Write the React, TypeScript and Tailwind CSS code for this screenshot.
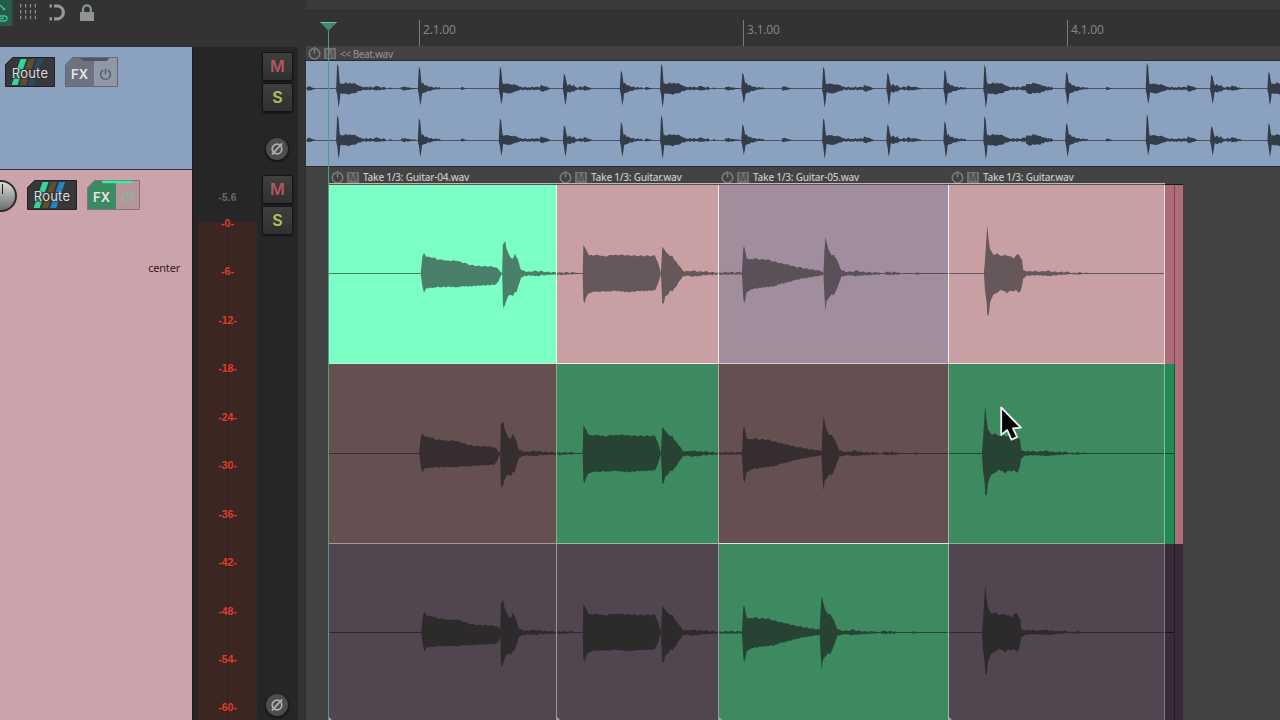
import clsx from "clsx";
import type { ReactNode } from "react";

type Point = [x: number, up: number, down: number];

type Burst = { at: number; points: Point[] };

// Points are in thirds of a pixel, relative to the start of the burst.
const BURSTS: Burst[] = [
  {
    at: 91.7,
    points: [
      [0, 0, 0], [5, 50, 38], [10, 62, 58], [16, 50, 45], [28, 49, 43], [42, 48, 42], [48, 42, 41], [62, 42, 41], [80, 39, 40],
      [108, 38, 41], [122, 34, 39], [138, 30, 38], [150, 25, 38], [180, 22, 36], [205, 21, 35], [225, 19, 33], [234, 12, 22], [243, 2, 2],
    ],
  },
  {
    at: 173.2,
    points: [
      [0, 5, 5], [2, 86, 90], [4, 90, 104], [9, 97, 92], [13, 75, 80], [19, 60, 66], [25, 48, 64], [32, 44, 68], [38, 60, 55],
      [42, 50, 58], [47, 42, 42], [53, 20, 24], [57, 10, 12], [70, 6, 7], [82, 5, 5], [98, 9, 8], [106, 6, 8], [116, 8, 5],
      [130, 4, 5], [150, 4, 3], [175, 3, 4], [198, 3, 3], [222, 3, 2], [224, 0, 0],
    ],
  },
  {
    at: 253.7,
    points: [
      [0, 5, 5], [2, 87, 80], [5, 80, 90], [12, 68, 68], [20, 54, 58], [36, 55, 55], [50, 54, 55], [64, 52, 53], [76, 53, 54],
      [82, 56, 53], [100, 56, 52], [138, 55, 56], [160, 53, 53], [217, 53, 51], [225, 35, 32], [234, 4, 4],
    ],
  },
  {
    at: 332,
    points: [
      [0, 5, 5], [4, 80, 90], [8, 74, 90], [13, 68, 68], [22, 58, 62], [28, 52, 50], [34, 54, 54], [40, 40, 44], [48, 32, 36],
      [56, 22, 22], [62, 14, 14], [65, 8, 8], [80, 7, 7], [98, 9, 9], [114, 6, 7], [132, 6, 5], [150, 4, 4], [176, 3, 3],
      [195, 4, 3], [236, 3, 3], [242, 4, 4],
    ],
  },
  {
    at: 413,
    points: [
      [0, 5, 5], [4, 78, 76], [7, 80, 90], [14, 46, 55], [24, 42, 50], [36, 45, 46], [56, 42, 43], [76, 42, 40], [96, 36, 38],
      [116, 31, 31], [136, 27, 27], [160, 20, 20], [180, 17, 15], [204, 12, 12], [224, 10, 8], [240, 6, 6], [244, 3, 3],
    ],
  },
  {
    at: 494.5,
    points: [
      [0, 5, 5], [3, 70, 70], [6, 110, 112], [9, 96, 84], [15, 72, 74], [24, 55, 62], [31, 56, 66], [38, 44, 50], [46, 28, 30],
      [53, 10, 10], [64, 6, 6], [84, 5, 5], [98, 10, 8], [114, 5, 5], [134, 4, 5], [150, 3, 3], [168, 3, 4], [172, 1, 1],
      [182, 1, 1], [186, 4, 4], [226, 4, 3], [230, 0, 0], [276, 0, 0], [279, 3, 3], [286, 3, 3], [288, 0, 0],
    ],
  },
  {
    at: 655,
    points: [
      [0, 5, 5], [3, 40, 50], [8, 120, 90], [10, 142, 124], [14, 100, 127], [18, 72, 88], [28, 57, 64], [38, 60, 58], [48, 54, 50],
      [60, 55, 52], [68, 54, 60], [78, 52, 52], [88, 45, 54], [95, 54, 48], [105, 57, 58], [110, 46, 52], [114, 42, 36],
      [118, 10, 14], [128, 6, 7], [150, 7, 5], [166, 5, 6], [194, 9, 7], [208, 5, 6], [230, 5, 4], [256, 4, 3], [262, 1, 1],
      [272, 3, 3], [292, 3, 3], [297, 0, 0], [308, 3, 3], [312, 0, 0],
    ],
  },
];

// Adds small, repeatable irregularities between the given points.
function roughen(points: Point[], step: number, amount: number): Point[] {
  const result: Point[] = [];
  for (let i = 0; i < points.length - 1; i++) {
    const [x0, u0, d0] = points[i];
    const [x1, u1, d1] = points[i + 1];
    result.push(points[i]);
    for (let x = x0 + step; x < x1 - step / 2; x += step) {
      const t = (x - x0) / (x1 - x0);
      const up = u0 + (u1 - u0) * t;
      const down = d0 + (d1 - d0) * t;
      result.push([
        x,
        Math.max(0, up + Math.sin(x * 12.9) * Math.min(amount, up * 0.5)),
        Math.max(0, down + Math.sin(x * 7.3 + 2) * Math.min(amount, down * 0.5)),
      ]);
    }
  }
  result.push(points[points.length - 1]);
  return result;
}

function outline(points: Point[], scale: number, at: number, base: number): string {
  const top = points.map(([x, up]) => `${(at + x * scale).toFixed(1)},${(base - up * scale).toFixed(1)}`);
  const bottom = [...points].reverse().map(([x, , down]) => `${(at + x * scale).toFixed(1)},${(base + down * scale).toFixed(1)}`);
  return `M${top.join("L")}L${bottom.join("L")}Z`;
}

const COLUMNS = [
  { start: 0, width: 228, title: "Take 1/3: Guitar-04.wav" },
  { start: 228, width: 162, title: "Take 1/3: Guitar.wav" },
  { start: 390, width: 230, title: "Take 1/3: Guitar-05.wav" },
  { start: 620, width: 216, title: "Take 1/3: Guitar.wav" },
];

type Lane = {
  base: number;
  shifts: number[];
  height: string;
  cells: { bg: string; wave: string; border: string }[];
  tails: [string, string];
};

const LANES: Lane[] = [
  {
    base: 88.5,
    shifts: [0, 0, 0, 0, 0, 0, 0],
    height: "h-[179px]",
    cells: [
      { bg: "bg-[#7bffc5]", wave: "text-[#4a8069]", border: "border-r-[#e8fff4] border-b-[#b8f5d8]" },
      { bg: "bg-[#c89fa3]", wave: "text-[#66575a]", border: "border-[#f8ecee]" },
      { bg: "bg-[#a08e9e]", wave: "text-[#5a5057]", border: "border-r-[#f4eef3] border-b-[#d8cdd6]" },
      { bg: "bg-[#c89fa3]", wave: "text-[#66575a]", border: "border-[#f0dfe1]" },
    ],
    tails: ["bg-[#ae6b78]", "bg-[#ae6b78]"],
  },
  {
    base: 89.5,
    shifts: [-1.6, -2, 0, 0, 0, -2, -2],
    height: "h-[180px]",
    cells: [
      { bg: "bg-[#654f51]", wave: "text-[#352d2f]", border: "border-r-[#7fae94] border-b-[#a8979a]" },
      { bg: "bg-[#3d8a60]", wave: "text-[#264334]", border: "border-[#a5b3a9]" },
      { bg: "bg-[#654f51]", wave: "text-[#352d2f]", border: "border-r-[#a5b3a9] border-b-[#d5ebe0]" },
      { bg: "bg-[#3d8a60]", wave: "text-[#264334]", border: "border-[#8fb39f]" },
    ],
    tails: ["bg-[#1f8a52]", "bg-[#ae6b78]"],
  },
  {
    base: 88.5,
    shifts: [0.5, -2, 0, 0, 0, -3.8, -2],
    height: "h-[177px]",
    cells: [
      { bg: "bg-[#51464f]", wave: "text-[#2c2a2b]", border: "border-[#9c939b]" },
      { bg: "bg-[#51464f]", wave: "text-[#2c2a2b]", border: "border-[#9c939b]" },
      { bg: "bg-[#3d8a60]", wave: "text-[#264334]", border: "border-[#a5b3a9]" },
      { bg: "bg-[#51464f]", wave: "text-[#2c2a2b]", border: "border-[#83757f]" },
    ],
    tails: ["bg-[#382a38]", "bg-[#382a38]"],
  },
];

type Hit = { at: number; up: number; down: number; decay: "long" | "medium" | "short" | "burst" };

const DECAYS: Record<Hit["decay"], Point[]> = {
  long: [
    [2, 5, 5], [5, 4.5, 5], [8, 6.5, 5.5], [10, 5, 6], [12, 6, 5.5], [14, 5, 5], [17, 5, 4.5], [19, 3.4, 3.5], [22, 2.4, 2.5], [24, 1.5, 1.5],
    [36, 1.3, 1.3], [39, 2.6, 2.2], [41, 1.4, 1.4], [47, 1.2, 1.3], [48, 0, 0], [51, 0, 0], [52, 1.2, 1], [54, 0, 0],
  ],
  medium: [
    [2, 4, 4], [5, 5, 4], [8, 5, 5.5], [11, 4, 4], [14, 4, 3.4], [17, 2.4, 2], [19, 1.4, 1.4], [28, 1.3, 1.3], [36, 1.4, 1.3], [39, 0.8, 1.4],
    [40, 3.2, 2.6], [43, 2.6, 2.8], [46, 2.2, 2], [48, 1, 1], [50, 0, 0],
  ],
  short: [[1.5, 4, 6], [3, 6, 4.5], [5, 3, 4], [7, 3.6, 3.2], [9, 2, 2.6], [12, 2, 1.6], [14, 0.8, 1.4], [16, 1.5, 1], [18, 0.5, 0.5], [20, 1.2, 1], [21, 0, 0]],
  burst: [[1.5, 6, 6], [3, 2.6, 3], [5, 4.5, 4], [7, 2.4, 3], [9, 4, 3.4], [11, 1.6, 1.4], [13, 1, 1], [16, 1.8, 1.8], [18, 0.7, 0.7], [20, 2.8, 2.4], [23, 1.4, 1.4], [26, 1, 1], [27, 0, 0]],
};

// Positions are measured from the left edge of the arrange view.
const HITS: Hit[] = [
  { at: 32, up: 25, down: 19, decay: "long" },
  { at: 113.7, up: 22, down: 17, decay: "short" },
  { at: 194.7, up: 22, down: 16, decay: "medium" },
  { at: 258.7, up: 15, down: 17, decay: "burst" },
  { at: 315.7, up: 18, down: 17, decay: "short" },
  { at: 355.9, up: 25, down: 19, decay: "long" },
  { at: 437.2, up: 16, down: 15, decay: "short" },
  { at: 518, up: 22, down: 19, decay: "medium" },
  { at: 582.2, up: 16, down: 17, decay: "burst" },
  { at: 639.3, up: 19, down: 18, decay: "short" },
  { at: 679.2, up: 24, down: 19.5, decay: "long" },
  { at: 761, up: 17, down: 17, decay: "short" },
  { at: 841.6, up: 26, down: 15.5, decay: "medium" },
  { at: 906, up: 14, down: 15.5, decay: "burst" },
  { at: 963.3, up: 17, down: 17, decay: "long" },
];

const BLOBS: [start: number, end: number, amp: number][] = [
  [1, 9, 2.2], [95, 110, 1.8], [155, 160, 1.5], [339, 346, 1.5], [419, 434, 1.8], [476, 485, 2.2], [606, 615, 2], [720, 747, 5.6], [800, 806, 1.6], [925, 936, 2],
];

function blobPath([start, end, amp]: [number, number, number], base: number): string {
  const len = end - start;
  const points: Point[] = [
    [0, amp * 0.8, amp * 0.7], [len * 0.15, amp * 0.8, amp], [len * 0.3, amp, amp * 0.8], [len * 0.5, amp * 0.7, amp * 0.8],
    [len * 0.7, amp * 0.35, amp * 0.4], [len, amp * 0.2, amp * 0.2],
  ];
  return outline(roughen(points, 1.2, 0.7), 1, start, base);
}

function BeatWave() {
  return (
    <svg viewBox="0 0 974 105" className="block h-[105px] w-[974px] text-[#333c49]" fill="currentColor" aria-hidden="true">
      {[27.5, 79].map((base) => (
        <g key={base}>
          <rect x="0" y={Math.floor(base)} width="974" height="1" opacity="0.75" />
          {HITS.map((hit) => (
            <g key={hit.at}>
              <path d={outline([[-1.8, 2, 2], [-0.8, hit.up, 6], [0.5, hit.up * 0.85, hit.down], [1.6, 7, hit.down * 0.7], [2.6, 2, 3]], 1, hit.at, base)} />
              <path d={outline(roughen(DECAYS[hit.decay], 1.1, 0.6), 1, hit.at, base)} />
            </g>
          ))}
          {BLOBS.map((blob) => (
            <path key={blob[0]} d={blobPath(blob, base)} />
          ))}
        </g>
      ))}
    </svg>
  );
}

function PowerIcon({ className }: { className: string }) {
  return (
    <svg viewBox="0 0 14 14" className={className} fill="none" stroke="currentColor" strokeWidth="1.5" aria-hidden="true">
      <path d="M4.4 2.3a5.3 5.3 0 1 0 5.2 0M7 .8v6" />
    </svg>
  );
}

function ItemLabel({ title, dim }: { title: string; dim?: boolean }) {
  return (
    <div className="flex items-center">
      <svg viewBox="0 0 13 13" className="size-[13px] shrink-0 text-[#7d7d7d]" fill="none" stroke="currentColor" strokeWidth="1.5" aria-hidden="true">
        <path d="M5.400 1.600a5.200 5.200 0 1 0 2.200 0M6.500 0v6.500" />
      </svg>
      <span className="ml-[3px] flex h-[11px] w-[12px] shrink-0 items-center justify-center bg-[#707070] font-['Open_Sans'] text-[10px] leading-none font-semibold text-[#4a4a4a]">
        M
      </span>
      <span
        className={clsx(
          "ml-[4px] font-['Noto_Sans',sans-serif] text-[10px] leading-none font-medium whitespace-nowrap",
          dim ? "tracking-[-0.45px] text-[#8b8b8b]" : "tracking-[-0.24px] text-[#c8c8c8]",
        )}
      >
        {title}
      </span>
    </div>
  );
}

function StripButton({ children, className }: { children: ReactNode; className: string }) {
  return (
    <div
      className={clsx(
        "flex h-[29px] w-[31px] items-center justify-center rounded-[2px] border border-[#151515] bg-linear-to-b from-[#3f3f3f] to-[#303030] pb-px font-['Inter',sans-serif] text-[16px] leading-none font-semibold shadow-[0_1px_2px_#111]",
        className,
      )}
    >
      {children}
    </div>
  );
}

function PhaseButton() {
  return (
    <div className="-ml-px flex size-[22px] items-center justify-center rounded-full bg-[#4b4d4e] text-[#aeb0b0] shadow-[0_1px_2px_1px_#151515]">
      <svg viewBox="0 0 14 14" className="size-[14px]" fill="none" stroke="currentColor" strokeWidth="1.7" aria-hidden="true">
        <circle cx="7" cy="7" r="4.8" />
        <path d="M1.800 12.600 12.200 1.400" />
      </svg>
    </div>
  );
}

function RouteButton({ stripes }: { stripes: [string, string, string] }) {
  return (
    <div className="relative h-[30px] w-[50px]">
      <svg viewBox="0 0 50 30" className="absolute inset-0" aria-hidden="true">
        <path d="M.5 7.500 7.500.5h42v29H.5z" fill="#36383b" stroke="#1f2225" />
        {stripes.map((color, i) => (
          <g key={color} fill={color} transform={`translate(${i * 8.3} 0)`}>
            <path d="M15.600 2h6l-3.600 10h-6z" />
            <path d="M12 12h6l-3.200 9h-6z" opacity="0.35" />
            <path d="M8.800 21.500h6L12.600 28h-6z" />
          </g>
        ))}
      </svg>
      <span className="absolute inset-0 flex items-center justify-center pt-[2px] font-['Inter',sans-serif] text-[13px] leading-none tracking-[0.2px] text-[#dcdcdc] [text-shadow:0_0_2px_#303236,0_0_2px_#303236]">
        Route
      </span>
    </div>
  );
}

function FxButton({ active }: { active?: boolean }) {
  return (
    <div className="relative h-[30px] w-[53px]">
      <svg viewBox="0 0 53 30" className="absolute inset-0" aria-hidden="true">
        <path d="M.5 7.500 7.500.5h45v29H.5z" fill={active ? "#b7959b" : "#8f98a6"} stroke={active ? "#857075" : "#5f6b7b"} />
        <path d="M1 7.700 7.700 1H29v28H1z" fill={active ? "#3a8a62" : "#6c7280"} />
        {active ? <path d="M15 .8h30v2.400H15z" fill="#2cf59a" /> : <path d="M15 1h29l-2 3H18z" fill="#4d5665" />}
      </svg>
      <div className="absolute inset-0 flex items-center pt-[4px]">
        <span className="w-[29px] pt-px text-center font-['Inter',sans-serif] text-[13px] leading-none font-semibold text-[#e6e6e6]">FX</span>
        <PowerIcon className={clsx("ml-[5px] size-[13px] shrink-0", active ? "text-[#72c697]" : "text-[#545b67]")} />
      </div>
    </div>
  );
}

function Toolbar() {
  return (
    <div className="flex h-[47px] items-start bg-[#333]">
      <svg viewBox="0 0 110 30" className="h-[30px] w-[110px]" aria-hidden="true">
        <rect x="0" y="0" width="12.5" height="26" fill="#28594a" />
        <path d="M0 5l4 4M0 16h4.500a2.500 2.500 0 0 1 0 5H0M0 18.500h4" fill="none" stroke="#35c48d" strokeWidth="1.5" />
        <circle cx="4" cy="9" r="1.300" fill="#35c48d" />
        <g stroke="#8c8c8c" strokeWidth="1.300" strokeDasharray="3.500 2.400">
          <path d="M20.700 4v17M25.600 4v17M30.500 4v17M35.400 4v17" />
        </g>
        <g fill="none" stroke="#979797" strokeWidth="3.200">
          <path d="M54 6h4a6.500 6.500 0 0 1 0 12.800H54" />
          <path d="M49.500 6h2.500M49.500 18.800h2.500" />
        </g>
        <path d="M83 12.500V9.200a3.900 3.900 0 0 1 7.800 0v3.300" fill="none" stroke="#8f9593" strokeWidth="2.200" />
        <rect x="80" y="12" width="14" height="9" rx="0.500" fill="#8f9593" />
      </svg>
    </div>
  );
}

function TrackOne() {
  return (
    <div className="flex h-[123px]">
      <div className="flex h-[122px] w-[193px] gap-[10px] border-r border-[#1b1b1b] bg-[#8ba1c0] pt-[10px] pl-[5px]">
        <RouteButton stripes={["#35d69b", "#5c512f", "#2b4b60"]} />
        <FxButton />
      </div>
      <div className="flex w-[105px] flex-col items-center bg-[#262626] pt-[5px] pl-[64px]">
        <StripButton className="text-[#b35660]">M</StripButton>
        <StripButton className="mt-[2px] text-[#b9bf5a]">S</StripButton>
        <div className="mt-[26px]">
          <PhaseButton />
        </div>
      </div>
    </div>
  );
}

const METER_MARKS = ["-0-", "-6-", "-12-", "-18-", "-24-", "-30-", "-36-", "-42-", "-48-", "-54-", "-60-"];

function TrackTwo() {
  return (
    <div className="flex h-[550px]">
      <div className="w-[193px] border-r border-[#1b1b1b] bg-[#cba4ab]">
        <div className="flex gap-[10px] pt-[10px]">
          <div className="-ml-[15px] size-[32px] shrink-0 rounded-full border-2 border-[#2c2c2c] bg-linear-to-b from-[#dcdcdc] to-[#6d6d6d]">
            <div className="mt-[2px] ml-[15px] h-[10px] w-px bg-[#222]" />
          </div>
          <RouteButton stripes={["#35d69b", "#5c512f", "#2784c4"]} />
          <FxButton active />
        </div>
        <p className="mt-[48px] pr-[12px] text-right font-['Noto_Sans',sans-serif] text-[11px] leading-[16px] tracking-[-0.2px] text-[#3a1a20]">center</p>
      </div>
      <div className="flex w-[105px] bg-[#262626]">
        <div className="ml-[5px] w-[59px]">
          <div className="flex h-[46px] items-end justify-center pb-[13px] font-['Liberation_Sans'] text-[10px] leading-none font-bold tracking-[0.2px] text-[#666]">
            -5.6
          </div>
          <div className="flex h-[504px] flex-col items-center bg-[linear-gradient(#2a2321,#2a2321),linear-gradient(#3c2622,#3c2622)] bg-size-[1px_498px,100%_498px] bg-bottom bg-no-repeat font-['Liberation_Sans'] text-[10.5px] font-bold text-[#e23b2b]">
            {METER_MARKS.map((mark) => (
              <span key={mark} className="h-[48.45px] shrink-0 pt-px leading-[12px] last:h-[14px]">
                {mark}
              </span>
            ))}
          </div>
        </div>
        <div className="flex w-[41px] flex-col items-center pt-[5px]">
          <StripButton className="text-[#b35660]">M</StripButton>
          <StripButton className="mt-[2px] text-[#b9bf5a]">S</StripButton>
          <div className="mt-auto mb-[4px]">
            <PhaseButton />
          </div>
        </div>
      </div>
    </div>
  );
}

function Ruler() {
  return (
    <div className="h-[46px] bg-[#333]">
      <div className="h-[9px] bg-[#3b3b3b]" />
      <div className="flex pt-[11px] pl-[113px] font-['Noto_Sans',sans-serif] text-[12px] leading-[19px] tracking-[-0.2px] text-[#858585]">
        {["2.1.00", "3.1.00", "4.1.00"].map((label) => (
          <div key={label} className="h-[26px] w-[324px] border-l border-[#7a7a7a] pl-[3px]">
            {label}
          </div>
        ))}
      </div>
    </div>
  );
}

function GuitarLane({ lane, index }: { lane: Lane; index: number }) {
  const first = index === 0;
  const last = index === LANES.length - 1;
  return (
    <div className={clsx("flex", lane.height)}>
      {COLUMNS.map((col, i) => {
        const cell = lane.cells[i];
        return (
          <div key={col.start} className={clsx("relative box-border overflow-hidden border-r", !last && "border-b", cell.bg, cell.border)} style={{ width: col.width }}>
            <svg
              viewBox={`${col.start} 0 ${col.width - 1} 178`}
              width={col.width - 1}
              height={178}
              className={clsx("block max-w-none", cell.wave)}
              fill="currentColor"
              aria-hidden="true"
            >
              <rect x="0" y={lane.base - 0.5} width="836" height="1" />
              {BURSTS.map((burst, n) => (
                <path key={burst.at} d={outline(roughen(burst.points, 4, 1.8), 1 / 3, burst.at + lane.shifts[n], lane.base)} />
              ))}
            </svg>
            {last && <span className="absolute -bottom-px left-0 size-[5px] bg-[#a9a3a8] [clip-path:polygon(0_0,0_100%,100%_100%)]" />}
          </div>
        );
      })}
      <div className={clsx("w-[10px] border-r border-black/30", lane.tails[0])}>
        {!first && <div className="h-px bg-black/50" style={{ marginTop: lane.base - 0.5 }} />}
      </div>
      <div className={clsx("w-[8px]", lane.tails[1])} />
    </div>
  );
}

function Arrange() {
  return (
    <div className="w-[974px] bg-[#434343]">
      <div className="flex h-[14px] items-center pt-px pl-[2px]">
        <ItemLabel title="<< Beat.wav" dim />
      </div>
      <div className="border-y border-[#242c38] bg-[#8ba1c0]">
        <BeatWave />
      </div>
      <div className="ml-[23px]">
        <div className="flex h-[16px] items-center pt-[4px]">
          {COLUMNS.map((col) => (
            <div key={col.start} className="pl-[2px]" style={{ width: col.width }}>
              <ItemLabel title={col.title} />
            </div>
          ))}
        </div>
        <div className="flex h-[2px]">
          <div className="w-[836px] border-t border-[#b9b9b9] bg-[#5a5456]" />
          <div className="mt-px w-[18px] bg-[#1c1719]" />
        </div>
        {LANES.map((lane, i) => (
          <GuitarLane key={i} lane={lane} index={i} />
        ))}
      </div>
    </div>
  );
}

export default function App() {
  return (
    <div className="relative flex h-[720px] w-[1280px] overflow-hidden bg-[#333]">
      <div className="flex w-[306px] shrink-0 flex-col">
        <Toolbar />
        <TrackOne />
        <TrackTwo />
      </div>
      <div className="flex shrink-0 flex-col">
        <Ruler />
        <Arrange />
      </div>
      {/* play cursor */}
      <div className="absolute top-[22px] left-[320px] flex w-[17px] flex-col items-center">
        <div className="h-[9px] w-[17px] border-t border-[#8fb5a6] bg-[#3f8a72] [clip-path:polygon(0_0,100%_0,50%_100%)]" />
        <div className="h-[690px] w-px bg-[#4f9c85]" />
      </div>
      <svg viewBox="0 0 24 38" className="absolute top-[404px] left-[999px] h-[38px] w-[24px]" aria-hidden="true">
        <path d="M2.200 3.500v27.500l6-5 4.200 9.600 5.800-2.500-4.200-8.800 8-.6z" fill="#050505" stroke="#f1f1f1" strokeWidth="1.800" strokeLinejoin="round" />
      </svg>
    </div>
  );
}
